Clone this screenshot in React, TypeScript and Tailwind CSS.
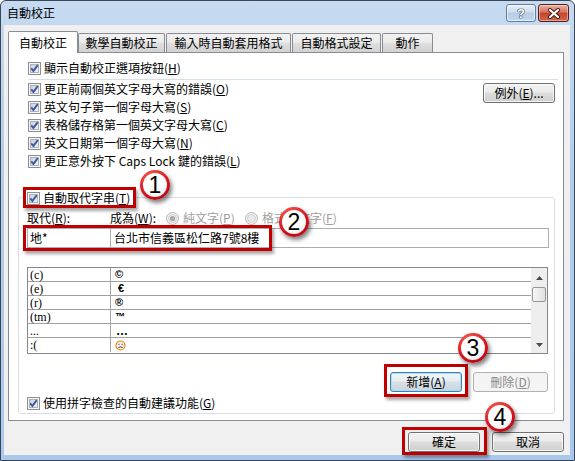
import React from "react";

const CJK = "font-['Noto_Sans_CJK_TC','Noto_Sans',sans-serif]";

function Mn({ c }: { c: string }) {
  return (
    <span>
      (<span className="underline underline-offset-[1px]">{c}</span>)
    </span>
  );
}

function Check() {
  return (
    <svg width="13" height="13" viewBox="0 0 13 13" className="shrink-0">
      <defs>
        <linearGradient id="cbg" x1="0" y1="0" x2="1" y2="1">
          <stop offset="0" stopColor="#c9cdd6" />
          <stop offset="1" stopColor="#f3f4f7" />
        </linearGradient>
      </defs>
      <rect x="0.5" y="0.5" width="12" height="12" fill="#f6f6f6" stroke="#8e8f8f" />
      <rect x="2.5" y="2.5" width="8" height="8" fill="url(#cbg)" stroke="#aeb3bd" />
      <path d="M3.2 6.4 L5.4 8.9 L9.8 3.2" stroke="#3f5aa0" strokeWidth="1.9" fill="none" />
    </svg>
  );
}

function Radio({ on }: { on?: boolean }) {
  return (
    <svg width="13" height="13" viewBox="0 0 13 13" className="shrink-0">
      <circle cx="6.5" cy="6.5" r="6" fill="#f4f4f4" stroke="#b5b5b5" />
      <circle cx="6.5" cy="6.5" r="4" fill="#e8e8e8" stroke="#d2d2d2" />
      {on && <circle cx="6.5" cy="6.5" r="2.6" fill="#a8a8a8" />}
    </svg>
  );
}

function Btn({ className, children }: { className: string; children: React.ReactNode }) {
  return (
    <div
      className={`h-[20px] rounded-[3px] border border-[#707070] bg-[linear-gradient(#f2f2f2_0%,#ebebeb_45%,#dddddd_50%,#cfcfcf_100%)] shadow-[inset_0_0_0_1px_rgba(255,255,255,0.75)] flex items-center justify-center text-[12px] leading-none shrink-0 ${className}`}
    >
      {children}
    </div>
  );
}

function Row({ children }: { children: React.ReactNode }) {
  return <div className="h-[18px] flex items-center">{children}</div>;
}

function CheckRow({ children }: { children: React.ReactNode }) {
  return (
    <Row>
      <Check />
      <span className="ml-[3px] leading-none whitespace-nowrap">{children}</span>
    </Row>
  );
}

function Badge({ n, className }: { n: string; className: string }) {
  return (
    <div
      className={`absolute w-[30px] h-[30px] rounded-full p-[3px] bg-[radial-gradient(circle_at_40%_30%,#ff7060,#d3101c_60%,#98000a)] shadow-[2px_3px_4px_rgba(0,0,0,0.5)] ${className}`}
    >
      <div className="w-full h-full rounded-full bg-[radial-gradient(circle_at_40%_35%,#ffffff_55%,#d4d4d4)] flex items-center justify-center font-['Liberation_Sans',sans-serif] text-[23px] leading-none text-black">
        {n}
      </div>
    </div>
  );
}

function Face() {
  return (
    <svg width="11" height="11" viewBox="0 0 11 11">
      <circle cx="5.5" cy="5.5" r="4.5" fill="#fff3e0" stroke="#e08a1e" strokeWidth="1.2" />
      <path d="M3.3 4.3 H4.6 M6.4 4.3 H7.7" stroke="#2a4a9a" strokeWidth="1" />
      <path d="M3.4 7.6 Q5.5 6 7.6 7.6" stroke="#2a3a6a" strokeWidth="1" fill="none" />
    </svg>
  );
}

const rows: [string, React.ReactNode][] = [
  ["(c)", <span className="font-['Liberation_Sans',sans-serif] font-bold text-[11px]">©</span>],
  ["(e)", <span className="ml-[3px] font-['Liberation_Sans',sans-serif] font-bold text-[11px]">€</span>],
  ["(r)", <span className="font-['Liberation_Sans',sans-serif] font-bold text-[11px]">®</span>],
  ["(tm)", <span className="font-['Liberation_Sans',sans-serif] font-bold text-[10px]">™</span>],
  ["...", <span className="ml-[1px] font-['Liberation_Sans',sans-serif] font-bold text-[12px]">…</span>],
  [":(", <Face />],
];

export default function App() {
  return (
    <div className="relative w-[575px] h-[461px] overflow-hidden bg-white">
      <div
        className={`${CJK} w-[575px] h-[461px] rounded-t-[6px] border border-[#3a4656] bg-[linear-gradient(#c6dbf1,#b3cce8_40%,#a9c9ec)] flex flex-col text-[12px] text-black`}
      >
        {/* Title bar */}
        <div className="h-[24px] shrink-0 flex items-start justify-between pl-[6px] pr-[5px]">
          <div className="mt-[5px] leading-[14px] text-[12px]">自動校正</div>
          <div className="flex gap-[2px] mt-[3px]">
            <div className="w-[30px] h-[18px] rounded-[3px] border border-[#5d7ea6] bg-[linear-gradient(#e8f0f9,#cddcee_45%,#b7cde6_50%,#c3d7ee)] shadow-[inset_0_0_0_1px_rgba(255,255,255,0.6)] flex items-center justify-center">
              <span className="font-['Liberation_Sans',sans-serif] font-bold text-[13px] leading-none text-white [text-shadow:0_0_1px_#1d2f4a,0_0_1px_#1d2f4a,0_0_1px_#1d2f4a]">
                ?
              </span>
            </div>
            <div className="w-[31px] h-[18px] rounded-[3px] border border-[#5a1d14] bg-[linear-gradient(#eab1a3,#d7725e_45%,#c4432c_50%,#d26a4c)] shadow-[inset_0_0_0_1px_rgba(255,255,255,0.4)] flex items-center justify-center">
              <svg width="14" height="11" viewBox="0 0 14 11">
                <path d="M3 2 L11 9 M11 2 L3 9" stroke="#3b1a14" strokeWidth="4" strokeLinecap="round" />
                <path d="M3 2 L11 9 M11 2 L3 9" stroke="#ffffff" strokeWidth="2.2" strokeLinecap="round" />
              </svg>
            </div>
          </div>
        </div>

        {/* Client area */}
        <div className="ml-[3px] mr-[4px] h-[430px] shrink-0 bg-[#f0f0f0] flex flex-col pt-[6px]">
          {/* Tabs */}
          <div className="ml-[4px] h-[21px] shrink-0 flex items-end relative z-10">
            <div className="h-[22px] w-[70px] mb-[-1px] bg-white border border-b-0 border-[#898c95] rounded-t-[2px] flex items-center justify-center leading-none">
              自動校正
            </div>
            <div className="h-[19px] w-[87px] border border-b-0 border-[#898c95] rounded-t-[2px] bg-[linear-gradient(#f2f2f2,#ebebeb_45%,#dddddd_55%,#d2d2d2)] flex items-center justify-center leading-none">
              數學自動校正
            </div>
            <div className="ml-[1px] h-[19px] w-[125px] border border-b-0 border-[#898c95] rounded-t-[2px] bg-[linear-gradient(#f2f2f2,#ebebeb_45%,#dddddd_55%,#d2d2d2)] flex items-center justify-center leading-none">
              輸入時自動套用格式
            </div>
            <div className="ml-[1px] h-[19px] w-[89px] border border-b-0 border-[#898c95] rounded-t-[2px] bg-[linear-gradient(#f2f2f2,#ebebeb_45%,#dddddd_55%,#d2d2d2)] flex items-center justify-center leading-none">
              自動格式設定
            </div>
            <div className="ml-[1px] h-[19px] w-[51px] border border-b-0 border-[#898c95] rounded-t-[2px] bg-[linear-gradient(#f2f2f2,#ebebeb_45%,#dddddd_55%,#d2d2d2)] flex items-center justify-center leading-none">
              動作
            </div>
          </div>

          {/* Panel */}
          <div className="ml-[4px] w-[556px] h-[369px] shrink-0 border border-[#898c95] bg-white flex flex-col pt-[6px]">
            <div className="pl-[19px]">
              <CheckRow>
                顯示自動校正選項按鈕<Mn c="H" />
              </CheckRow>
            </div>
            <div className="ml-[19px] mt-[2px] w-[530px] h-px bg-[#d5dfe5]" />
            <div className="flex">
              <div className="pl-[19px] flex flex-col">
                <CheckRow>
                  更正前兩個英文字母大寫的錯誤<Mn c="O" />
                </CheckRow>
                <CheckRow>
                  英文句子第一個字母大寫<Mn c="S" />
                </CheckRow>
                <CheckRow>
                  表格儲存格第一個英文字母大寫<Mn c="C" />
                </CheckRow>
                <CheckRow>
                  英文日期第一個字母大寫<Mn c="N" />
                </CheckRow>
                <CheckRow>
                  更正意外按下 Caps Lock 鍵的錯誤<Mn c="L" />
                </CheckRow>
              </div>
              <div className="ml-auto mr-[8px] mt-[3px]">
                <Btn className="w-[72px]">
                  例外<Mn c="E" />...
                </Btn>
              </div>
            </div>

            {/* Group */}
            <div className="relative ml-[9px] mt-[27px] w-[537px] h-[217px] shrink-0 border border-[#d5dfe5] rounded-[3px] pl-[8px] pt-[11px] flex flex-col">
              <div className="absolute left-[7px] top-[-9px] bg-white pl-[1px] pr-[3px]">
                <CheckRow>
                  自動取代字串<Mn c="T" />
                </CheckRow>
              </div>

              <div className="flex h-[18px] items-center leading-none whitespace-nowrap">
                <span className="w-[83px]">
                  取代<Mn c="R" />:
                </span>
                <span className="w-[56px]">
                  成為<Mn c="W" />:
                </span>
                <Radio on />
                <span className="ml-[4px] w-[62px] text-[#a0a0a0]">
                  純文字<Mn c="P" />
                </span>
                <Radio />
                <span className="ml-[4px] text-[#a0a0a0]">
                  格式化文字<Mn c="F" />
                </span>
              </div>

              <div className="flex mt-[1px] h-[20px]">
                <div className="w-[84px] h-[20px] border border-[#abadb3] pl-[2px] flex items-center leading-none">地*</div>
                <div className="-ml-px w-[439px] h-[20px] border border-[#abadb3] pl-[3px] flex items-center leading-none">
                  台北市信義區松仁路7號8樓
                </div>
              </div>

              <div className="mt-[19px] w-[521px] h-[87px] shrink-0 border border-[#828790] flex">
                <div className="flex-1 flex flex-col">
                  {rows.map(([a, b], i) => (
                    <div
                      key={i}
                      className={
                        i < rows.length - 1
                          ? "h-[14px] flex border-b border-[#a0a0a0]"
                          : "h-[14px] flex"
                      }
                    >
                      <div className="w-[83px] border-r border-[#a0a0a0] pl-[2px] flex items-center font-['Liberation_Serif',serif] text-[12px] leading-none">
                        {a}
                      </div>
                      <div className="pl-[4px] flex items-center leading-none">{b}</div>
                    </div>
                  ))}
                </div>
                <div className="w-[16px] bg-[#eeeeee] flex flex-col">
                  <div className="h-[19px] flex items-center justify-center">
                    <svg width="7" height="4" viewBox="0 0 7 4">
                      <path d="M0 4 L3.5 0 L7 4 Z" fill="#4a4a4a" />
                    </svg>
                  </div>
                  <div className="mx-[1px] h-[15px] rounded-[2px] border border-[#979797] bg-[linear-gradient(90deg,#f6f6f6,#e2e2e2)]" />
                  <div className="flex-1" />
                  <div className="h-[17px] flex items-center justify-center">
                    <svg width="7" height="4" viewBox="0 0 7 4">
                      <path d="M0 0 L3.5 4 L7 0 Z" fill="#4a4a4a" />
                    </svg>
                  </div>
                </div>
              </div>

              <div className="mt-[18px] flex justify-end pr-[6px] gap-[11px]">
                <div className="w-[72px] h-[20px] rounded-[3px] border border-[#3c7fb1] bg-[linear-gradient(#f2f6fa_0%,#e6edf3_45%,#d7dfe7_50%,#cdd6df_100%)] shadow-[inset_0_0_0_1px_#a9dcf6] flex items-center justify-center leading-none">
                  新增<Mn c="A" />
                </div>
                <div className="w-[75px] h-[20px] rounded-[3px] border border-[#adb2b5] bg-[#f4f4f4] text-[#8a8a8a] flex items-center justify-center leading-none">
                  刪除<Mn c="D" />
                </div>
              </div>

              <div className="mt-[2px]">
                <CheckRow>
                  使用拼字檢查的自動建議功能<Mn c="G" />
                </CheckRow>
              </div>
            </div>
          </div>

          {/* Bottom buttons */}
          <div className="ml-[4px] w-[556px] mt-[11px] flex justify-end gap-[12px]">
            <Btn className="w-[72px]">確定</Btn>
            <Btn className="w-[72px]">取消</Btn>
          </div>
        </div>
      </div>

      {/* Annotations */}
      <div className="absolute left-[23px] top-[187px] w-[113px] h-[21px] border-[3px] border-[#c00000] shadow-[2px_3px_3px_rgba(0,0,0,0.35)]" />
      <div className="absolute left-[23px] top-[225px] w-[249px] h-[26px] border-[3px] border-[#c00000] shadow-[2px_3px_3px_rgba(0,0,0,0.35)]" />
      <div className="absolute left-[384px] top-[364px] w-[84px] h-[33px] border-[3px] border-[#c00000] shadow-[2px_3px_3px_rgba(0,0,0,0.35)]" />
      <div className="absolute left-[402px] top-[427px] w-[85px] h-[28px] border-[3px] border-[#c00000] shadow-[2px_3px_3px_rgba(0,0,0,0.35)]" />

      <Badge n="1" className="left-[140px] top-[170px]" />
      <Badge n="2" className="left-[279px] top-[207px]" />
      <Badge n="3" className="left-[458px] top-[333px]" />
      <Badge n="4" className="left-[485px] top-[402px]" />
    </div>
  );
}
